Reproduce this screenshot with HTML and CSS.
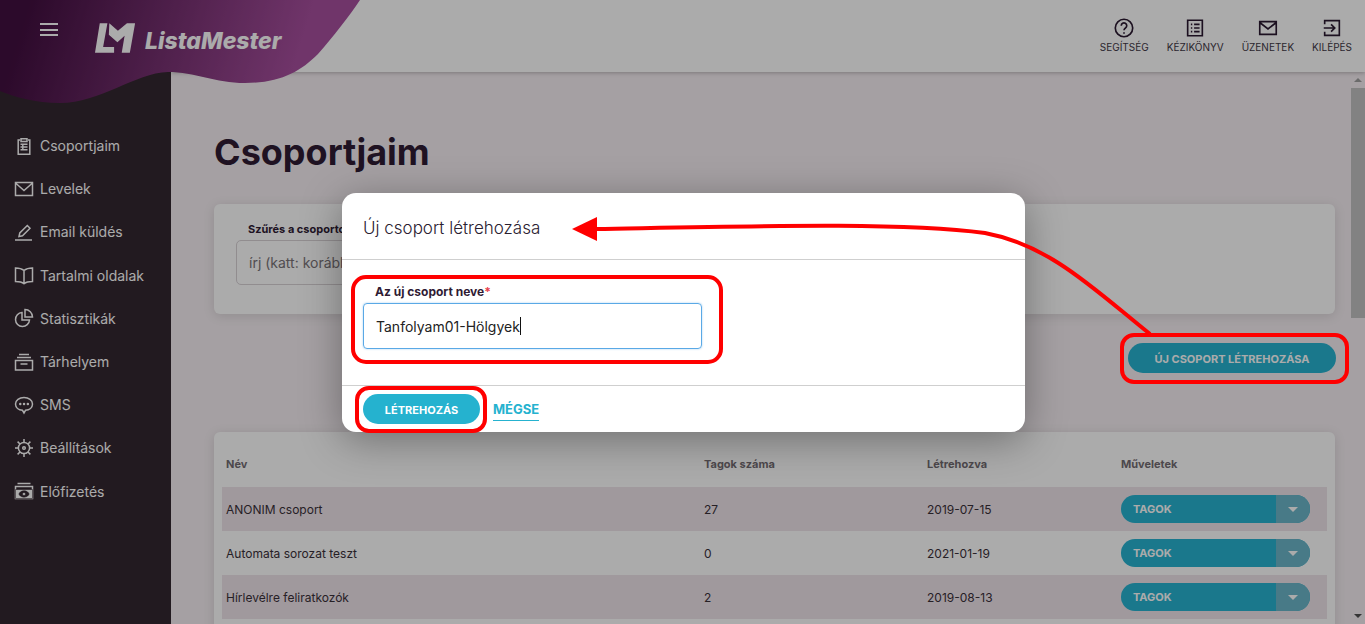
FILE: index.html
```html
<!DOCTYPE html>
<html lang="hu">
<head>
<meta charset="utf-8">
<title>ListaMester - Csoportjaim</title>
<link rel="stylesheet" href="styles.css">
</head>
<body>
<div class="app">
  <aside class="sidebar">
    <nav class="nav">
      <a class="nav-item"><svg class="nav-icon" viewBox="0 0 20 20"><path d="M6 4H4.2v14.2h11.6V4H14M7 2.8h6v2.6H7zM6.5 8.2h7M6.5 11h7M6.5 13.8h7M8.8 8.2v5.6"/></svg>Csoportjaim</a>
      <a class="nav-item"><svg class="nav-icon" viewBox="0 0 20 20"><path d="M1.5 3.5h17v13h-17zM1.5 4l8.5 7.5L18.500 4"/></svg>Levelek</a>
      <a class="nav-item"><svg class="nav-icon" viewBox="0 0 20 20"><path d="M1 18h17M5 14.500l.8-3.500 7.500-7.500 2.700 2.700-7.500 7.500z"/></svg>Email küldés</a>
      <a class="nav-item"><svg class="nav-icon" viewBox="0 0 20 20"><path d="M10 5.500C8 3.800 5 3 1.500 3v13.500c3.500 0 6.500.5 8.500 2.200 2-1.700 5-2.200 8.500-2.200V3C15 3 12 3.800 10 5.500zM10 5.500v13"/></svg>Tartalmi oldalak</a>
      <a class="nav-item"><svg class="nav-icon" viewBox="0 0 20 20"><path d="M8 4.500a7 7 0 1 0 7.500 7.500H8zM11 1.500V9h7.500A7.500 7.500 0 0 0 11 1.500z"/></svg>Statisztikák</a>
      <a class="nav-item"><svg class="nav-icon" viewBox="0 0 20 20"><path d="M5 2.500h10M3 5.500h14M1.500 8.500h17v9.500h-17zM6.500 12h7"/></svg>Tárhelyem</a>
      <a class="nav-item"><svg class="nav-icon" viewBox="0 0 20 20"><path d="M10 2.500c-4.700 0-8.500 2.600-8.500 6.500 0 3.600 3.200 6 7 6.300l1.500 2.700 1.500-2.700c3.800-.3 7-2.700 7-6.300 0-3.900-3.800-6.500-8.500-6.500z"/><path class="dots" d="M6.200 9h.1M10 9h.1M13.800 9h.1"/></svg>SMS</a>
      <a class="nav-item"><svg class="nav-icon" viewBox="0 0 20 20"><circle cx="10" cy="10" r="5.600"/><circle cx="10" cy="10" r="1.300"/><path d="M10 1v3M10 16v3M1 10h3M16 10h3M3.600 3.600l2.400 2.400M14 14l2.400 2.400M3.600 16.400L6 14M14 6l2.400-2.400"/></svg>Beállítások</a>
      <a class="nav-item"><svg class="nav-icon" viewBox="0 0 20 20"><path d="M3.500 2.500h13M1.500 5.500h17v12h-17z"/><path class="solid" d="M1.500 8.500h17v9h-17zM10 9.800c-3 0-5 2.200-5 3.200s2 3.200 5 3.200 5-2.200 5-3.200-2-3.200-5-3.200z"/><circle class="solid" cx="10" cy="13" r="1.600"/></svg>Előfizetés</a>
    </nav>
  </aside>
  <div class="body">
    <header class="topbar">
      <a class="top-action"><svg class="top-icon" viewBox="0 0 24 24"><circle cx="12" cy="12" r="9.500"/><path d="M9 9.500a3 3 0 1 1 4.600 2.500c-1 .7-1.600 1.300-1.600 2.500M12 16.500v1.800"/></svg>SEGÍTSÉG</a>
      <a class="top-action"><svg class="top-icon" viewBox="0 0 24 24"><path d="M4 3.500h16v17H4zM7.500 8h1.500M11 8h6M7.500 12h1.500M11 12h6M7.500 16h1.500M11 16h6"/></svg>KÉZIKÖNYV</a>
      <a class="top-action"><svg class="top-icon" viewBox="0 0 24 24"><path d="M3 5h18v14H3zM3 6l9 7 9-7"/></svg>ÜZENETEK</a>
      <a class="top-action"><svg class="top-icon" viewBox="0 0 24 24"><path d="M4 8V4h16v16H4v-4M3 12h12M11 8l4 4-4 4"/></svg>KILÉPÉS</a>
    </header>
    <div class="scroll-area">
      <main class="content">
        <h1 class="page-title">Csoportjaim</h1>
        <section class="card filter-card">
          <label class="field-label">Szűrés a csoportok között</label>
          <div class="filter-input">írj (katt: korábbi csoport)</div>
        </section>
        <div class="create-row"><button class="pill-btn create-btn">ÚJ CSOPORT LÉTREHOZÁSA</button></div>
        <section class="card table-card">
          <div class="t-row t-head"><span>Név</span><span>Tagok száma</span><span>Létrehozva</span><span>Műveletek</span></div>
          <div class="t-row stripe"><span>ANONIM csoport</span><span>27</span><span>2019-07-15</span><span class="split"><b>TAGOK</b><i></i></span></div>
          <div class="t-row"><span>Automata sorozat teszt</span><span>0</span><span>2021-01-19</span><span class="split"><b>TAGOK</b><i></i></span></div>
          <div class="t-row stripe"><span>Hírlevélre feliratkozók</span><span>2</span><span>2019-08-13</span><span class="split"><b>TAGOK</b><i></i></span></div>
        </section>
      </main>
      <div class="scrollbar">
        <span class="arrow-up"></span>
        <span class="thumb"></span>
        <span class="arrow-down"></span>
      </div>
    </div>
  </div>
</div>

<svg class="blob" viewBox="0 0 362 106" aria-hidden="true">
  <defs>
    <linearGradient id="blobfill" x1="30" y1="0" x2="290" y2="80" gradientUnits="userSpaceOnUse">
      <stop offset="0" stop-color="#420f40"/>
      <stop offset="1" stop-color="#a74f9e"/>
    </linearGradient>
  </defs>
  <path fill="url(#blobfill)" d="M0 0H360C350 15 333 37 318 54 300 72 280 83 245 83 215 83 195 72 168 72 135 73 100 103 60 103 35 103 15 97 0 91Z"/>
</svg>
<div class="brand">
  <button class="burger" aria-label="Menü"><span></span><span></span><span></span></button>
  <svg class="brand-mark" viewBox="0 0 44 32"><path d="M5 0h8L8.500 25H20V31H0zM15 0l9 8 9.500-8H42L36.500 31H28L31 13l-7.500 7L14.500 12z"/></svg>
  <span class="brand-name">ListaMester</span>
</div>

<div class="backdrop"></div>

<div class="modal">
  <h2 class="modal-title">Új csoport létrehozása</h2>
  <div class="modal-body">
    <label class="modal-label">Az új csoport neve<em>*</em></label>
    <div class="modal-input">Tanfolyam01-Hölgyek<span class="caret"></span></div>
  </div>
  <div class="modal-foot">
    <button class="pill-btn submit-btn">LÉTREHOZÁS</button>
    <a class="cancel">MÉGSE</a>
  </div>
</div>

<svg class="annotations" viewBox="0 0 1365 624" aria-hidden="true">
  <rect x="353" y="277" width="368" height="85" rx="13"/>
  <rect x="357" y="388" width="128" height="43" rx="12"/>
  <rect x="1122" y="335" width="225" height="47" rx="12"/>
  <path d="M596 229C760 226 900 222 985 233 1050 245 1095 290 1150 334"/>
  <polygon points="572,229 597,217 597,241"/>
</svg>
</body>
</html>
```
FILE: styles.css
```css
* { box-sizing: border-box; }
html, body { margin: 0; height: 100%; overflow: hidden; }
body {
  font-family: Inter, "Open Sans", sans-serif;
  color: #2e2530;
  background: #f6eff3;
}
.app { display: flex; height: 624px; }
.sidebar {
  flex: 0 0 171px;
  background: #342730;
  padding-top: 124px;
}
.nav { display: flex; flex-direction: column; }
.nav-item {
  display: flex;
  align-items: center;
  gap: 6px;
  height: 43.2px;
  padding-left: 14px;
  color: #fff;
  font-size: 14px;
}
.nav-icon {
  width: 20px; height: 20px; flex: none;
  fill: none; stroke: #fff; stroke-width: 1.5;
}
.nav-icon .dots { stroke-width: 2.4; stroke-linecap: round; }
.nav-icon .solid { fill: #fff; stroke: #342730; stroke-width: .6; }
.body { flex: 1; min-width: 0; display: flex; flex-direction: column; }
.topbar {
  flex: 0 0 72px;
  background: #fff;
  box-shadow: 0 1px 4px rgba(0,0,0,.25);
  display: flex;
  justify-content: flex-end;
  align-items: flex-start;
  gap: 18px;
  padding: 17px 13px 0 0;
  position: relative;
  z-index: 1;
}
.top-action {
  display: flex; flex-direction: column; align-items: center;
  font-size: 10px; line-height: 12px; color: #3f3846;
  gap: 2px;
}
.top-icon { width: 22px; height: 22px; fill: none; stroke: #2a1830; stroke-width: 1.800; }
.scroll-area { flex: 1; min-height: 0; display: flex; }
.content { flex: 1; min-width: 0; padding: 0 16px 0 43px; overflow: hidden; }
.page-title {
  margin: 56px 0 28px;
  font-size: 36px;
  line-height: 48px;
  font-weight: 700;
  color: #2f1b34;
}
.card {
  background: #fff;
  border-radius: 6px;
  box-shadow: 0 2px 12px rgba(0,0,0,.12);
}
.filter-card { height: 110px; padding: 18px 22px; }
.field-label { display: block; margin: 0 0 4px 12px; font-size: 11px; line-height: 14px; font-weight: 700; color: #2f1b34; }
.filter-input {
  height: 45px; width: 420px;
  border: 1px solid #d8d2d6; border-radius: 5px;
  padding: 0 12px; line-height: 43px;
  font-size: 14px; color: #7a7478;
}
.create-row { display: flex; justify-content: flex-end; margin: 29px -1px 59px 0; }
.pill-btn {
  border: 0; border-radius: 15px; height: 30px;
  background: #27b3d1; color: #fff;
  font: 700 11px/30px Inter, sans-serif;
}
.create-btn { width: 208px; }
.table-card { padding: 8px 8px 0; height: 260px; }
.t-row {
  display: grid;
  grid-template-columns: 478px 223px 194px 1fr;
  align-items: center;
  height: 44px;
  padding-left: 4px;
  font-size: 12px;
  color: #3a3039;
}
.t-head { height: 47px; font-weight: 700; font-size: 11px; color: #736c72; }
.stripe { background: #efe4ea; }
.split {
  display: flex; width: 189px; height: 28px;
  border-radius: 14px; overflow: hidden;
  background: #27b3d1; color: #fff;
}
.split b { flex: 1; padding-left: 12px; font-size: 11px; line-height: 28px; }
.split i {
  position: relative;
  flex: 0 0 34px; background: #6cb6c9;
}
.split i::after {
  content: ""; position: absolute; left: 12px; top: 12px;
  border: 5px solid transparent; border-top-color: #fff; border-bottom: 0;
}
.scrollbar {
  flex: 0 0 14px;
  display: flex; flex-direction: column; align-items: center;
  padding-top: 6px;
  position: relative;
}
.arrow-up { border: 4px solid transparent; border-bottom: 4px solid #a0a0a0; border-top: 0; }
.thumb { width: 14px; height: 230px; margin-top: 6px; background: #c2c2c2; }
.arrow-down {
  margin-top: auto; margin-bottom: 6px;
  border: 4px solid transparent; border-top: 4px solid #505050; border-bottom: 0;
}
.blob { position: absolute; left: 0; top: 0; width: 362px; height: 106px; z-index: 2; }
.brand { position: absolute; left: 40px; top: 23px; z-index: 3; display: flex; align-items: flex-start; }
.burger { width: 18px; height: 13px; padding: 0; border: 0; background: none; display: flex; flex-direction: column; justify-content: space-between; }
.burger span { display: block; height: 2px; background: #fff; }
.brand-mark { width: 42px; height: 31px; margin-left: 37px; fill: #fff; }
.brand-name { margin: 5px 0 0 8px; font: italic 800 23px/26px Inter, sans-serif; color: #fff; }
.backdrop { position: absolute; inset: 0; background: rgba(0,0,0,.33); z-index: 4; }
.modal {
  position: absolute; left: 342px; top: 193px; width: 683px; height: 239px;
  background: #fff; border-radius: 14px; z-index: 5;
  box-shadow: 0 8px 40px rgba(0,0,0,.35);
  display: flex; flex-direction: column;
}
.modal-title {
  margin: 0; height: 67px; flex: none;
  padding: 23px 21px 0;
  font-size: 17px; line-height: 24px; font-weight: 300; color: #2a2030;
  border-bottom: 1px solid #cfcfcf;
}
.modal-body { flex: 1; padding: 25px 21px 0; border-bottom: 1px solid #cfcfcf; }
.modal-label { display: block; margin: 0 0 4px 12px; font-size: 12px; line-height: 14px; font-weight: 700; color: #2f1b34; }
.modal-label em { color: #e8404a; font-style: normal; }
.modal-input {
  display: flex; align-items: center;
  width: 339px; height: 46px;
  border: 1px solid #5aa9e6; border-radius: 4px;
  padding: 0 12px;
  font-size: 14px; color: #222;
  box-shadow: 0 0 2px rgba(90,169,230,.6);
}
.caret { width: 1px; height: 18px; background: #111; }
.modal-foot { flex: 0 0 46px; display: flex; align-items: flex-start; gap: 13px; padding: 8px 21px 0; }
.submit-btn { width: 117px; background: #25b2cf; }
.cancel {
  margin-top: 6px; color: #25b2cf; font-size: 13px; font-weight: 700;
  line-height: 18px; border-bottom: 1px solid #25b2cf; padding-bottom: 2px;
}
.annotations { position: absolute; left: 0; top: 0; width: 1365px; height: 624px; z-index: 6; pointer-events: none; }
.annotations rect, .annotations path { fill: none; stroke: #f00; stroke-width: 4; }
.annotations polygon { fill: #f00; }
```
